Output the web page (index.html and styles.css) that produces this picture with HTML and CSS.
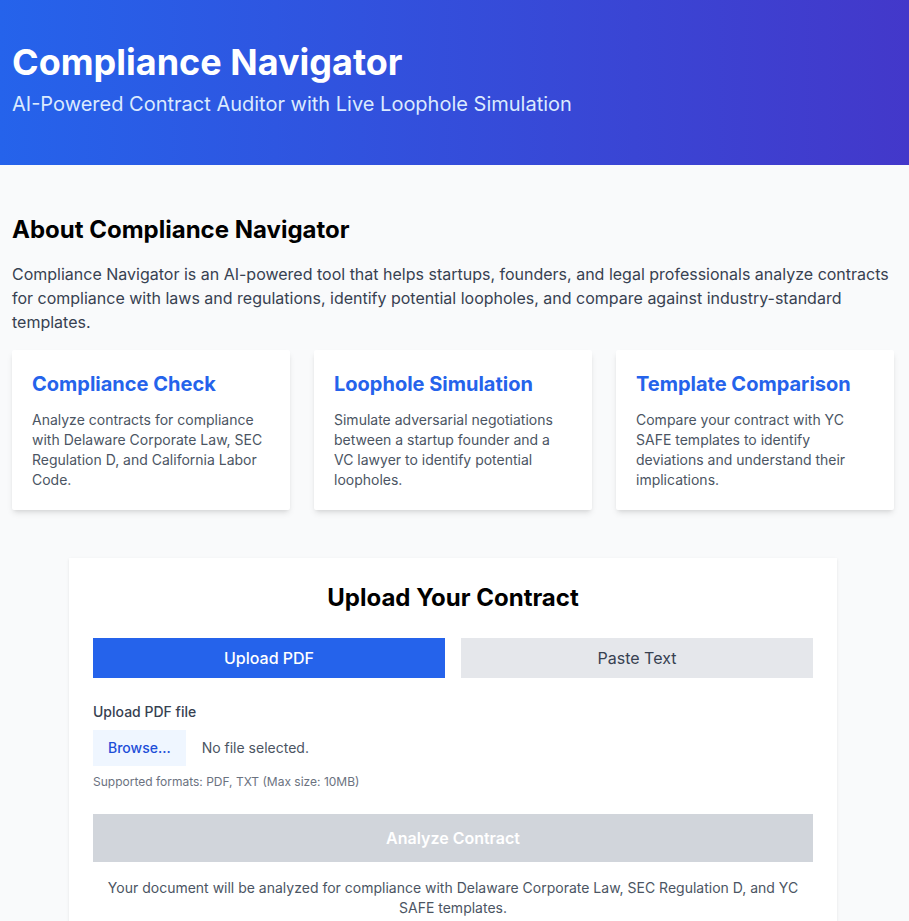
FILE: index.html
```html
<!DOCTYPE html>
<html lang="en">
<head>
<meta charset="utf-8">
<title>Compliance Navigator</title>
<link rel="stylesheet" href="styles.css">
</head>
<body>
<header class="hero">
  <div class="container">
    <h1 class="hero-title">Compliance Navigator</h1>
    <p class="hero-sub">AI-Powered Contract Auditor with Live Loophole Simulation</p>
  </div>
</header>
<main class="container main">
  <section class="about">
    <h2 class="about-title">About Compliance Navigator</h2>
    <p class="about-text">Compliance Navigator is an AI-powered tool that helps startups, founders, and legal professionals analyze contracts for compliance with laws and regulations, identify potential loopholes, and compare against industry-standard templates.</p>
    <div class="features">
      <div class="feature">
        <h3 class="feature-title">Compliance Check</h3>
        <p class="feature-text">Analyze contracts for compliance with Delaware Corporate Law, SEC Regulation D, and California Labor Code.</p>
      </div>
      <div class="feature">
        <h3 class="feature-title">Loophole Simulation</h3>
        <p class="feature-text">Simulate adversarial negotiations between a startup founder and a VC lawyer to identify potential loopholes.</p>
      </div>
      <div class="feature">
        <h3 class="feature-title">Template Comparison</h3>
        <p class="feature-text">Compare your contract with YC SAFE templates to identify deviations and understand their implications.</p>
      </div>
    </div>
  </section>
  <section class="upload">
    <h2 class="upload-title">Upload Your Contract</h2>
    <div class="tabs">
      <button class="tab tab-active" type="button">Upload PDF</button>
      <button class="tab" type="button">Paste Text</button>
    </div>
    <label class="field-label">Upload PDF file</label>
    <div class="file-row">
      <span class="browse">Browse...</span>
      <span class="file-name">No file selected.</span>
    </div>
    <p class="hint">Supported formats: PDF, TXT (Max size: 10MB)</p>
    <button class="analyze" type="button">Analyze Contract</button>
    <p class="note">Your document will be analyzed for compliance with Delaware Corporate Law, SEC Regulation D, and YC SAFE templates.</p>
  </section>
</main>
</body>
</html>
```
FILE: styles.css
```css
* { box-sizing: border-box; }
html, body { margin: 0; padding: 0; }
body {
  background: #f9fafb;
  font-family: Inter, "Noto Sans", "Liberation Sans", sans-serif;
  color: #111827;
}
.container {
  padding-left: 12px;
  padding-right: 15px;
}
.hero {
  background: linear-gradient(to right, #2563eb, #4338ca);
  color: #fff;
  padding: 42px 0 47px;
}
.hero-title {
  margin: 0 0 8px;
  font-size: 36px;
  line-height: 40px;
  font-weight: 700;
}
.hero-sub {
  margin: 0;
  font-size: 20px;
  line-height: 28px;
  color: #dbeafe;
}
.main {
  padding-top: 49px;
  padding-bottom: 48px;
}
.about-title {
  margin: 0 0 16px;
  font-size: 24px;
  line-height: 32px;
  font-weight: 700;
  color: #000;
}
.about-text {
  margin: 0 0 16px;
  font-size: 16px;
  line-height: 24px;
  color: #374151;
}
.features {
  display: grid;
  grid-template-columns: repeat(3, 1fr);
  gap: 24px;
}
.feature {
  background: #fff;
  padding: 20px;
  border-radius: 2px;
  box-shadow: 0 4px 6px -1px rgba(0,0,0,0.1), 0 2px 4px -2px rgba(0,0,0,0.1);
}
.feature-title {
  margin: 0 0 12px;
  font-size: 20px;
  line-height: 28px;
  font-weight: 700;
  color: #2563eb;
}
.feature-text {
  margin: 0;
  font-size: 14px;
  line-height: 20px;
  color: #4b5563;
}
.upload {
  max-width: 768px;
  margin: 48px auto 0;
  background: #fff;
  padding: 24px;
  box-shadow: 0 1px 3px rgba(0,0,0,0.08), 0 1px 2px -1px rgba(0,0,0,0.08);
}
.upload-title {
  margin: 0 0 24px;
  text-align: center;
  font-size: 24px;
  line-height: 32px;
  font-weight: 700;
  color: #000;
}
.tabs {
  display: grid;
  grid-template-columns: 1fr 1fr;
  gap: 16px;
  margin-bottom: 24px;
}
.tab {
  height: 40px;
  border: 0;
  font-family: inherit;
  font-size: 16px;
  background: #e5e7eb;
  color: #374151;
  padding: 0;
}
.tab-active {
  background: #2563eb;
  color: #fff;
  font-weight: 500;
}
.field-label {
  display: block;
  margin-bottom: 8px;
  font-size: 14px;
  line-height: 20px;
  font-weight: 500;
  color: #374151;
}
.file-row {
  display: flex;
  align-items: center;
  gap: 16px;
}
.browse {
  background: #eff6ff;
  color: #1d4ed8;
  font-size: 14px;
  line-height: 20px;
  font-weight: 500;
  padding: 8px 15px;
}
.file-name {
  font-size: 14px;
  line-height: 20px;
  color: #4b5563;
}
.hint {
  margin: 8px 0 0;
  font-size: 12px;
  line-height: 16px;
  color: #6b7280;
}
.analyze {
  display: block;
  width: 100%;
  height: 48px;
  margin-top: 24px;
  border: 0;
  background: #d1d5db;
  color: #fff;
  font-family: inherit;
  font-size: 16px;
  font-weight: 600;
}
.note {
  margin: 16px 0 0;
  text-align: center;
  font-size: 14px;
  line-height: 20px;
  color: #4b5563;
}
```
